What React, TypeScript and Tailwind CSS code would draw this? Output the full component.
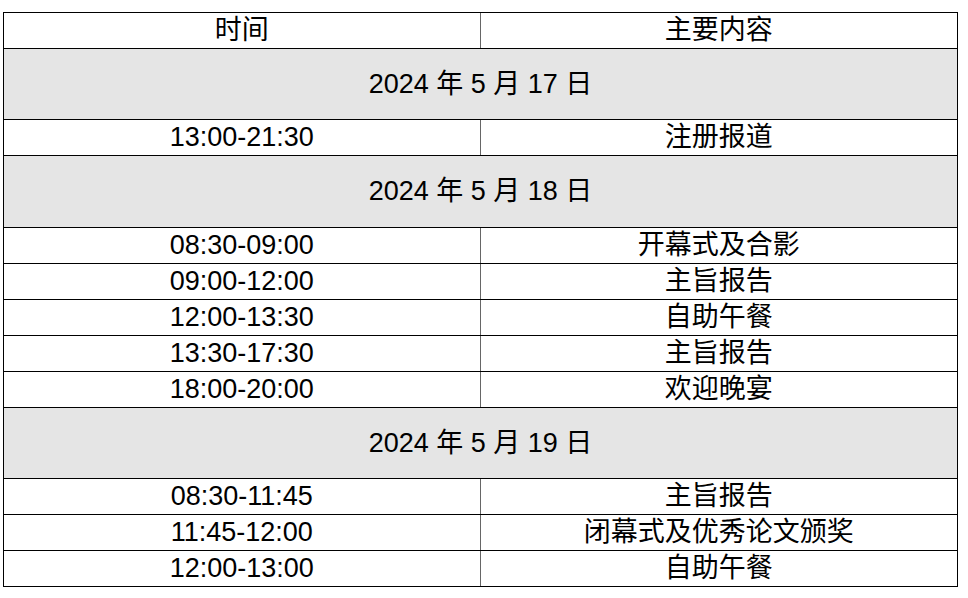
type Row =
  | { kind: 'date'; label: string; h: string }
  | { kind: 'item'; time: string; content: string }

const rows: Row[] = [
  { kind: 'date', label: '2024 年 5 月 17 日', h: 'h-[71px]' },
  { kind: 'item', time: '13:00-21:30', content: '注册报道' },
  { kind: 'date', label: '2024 年 5 月 18 日', h: 'h-[72px]' },
  { kind: 'item', time: '08:30-09:00', content: '开幕式及合影' },
  { kind: 'item', time: '09:00-12:00', content: '主旨报告' },
  { kind: 'item', time: '12:00-13:30', content: '自助午餐' },
  { kind: 'item', time: '13:30-17:30', content: '主旨报告' },
  { kind: 'item', time: '18:00-20:00', content: '欢迎晚宴' },
  { kind: 'date', label: '2024 年 5 月 19 日', h: 'h-[71px]' },
  { kind: 'item', time: '08:30-11:45', content: '主旨报告' },
  { kind: 'item', time: '11:45-12:00', content: '闭幕式及优秀论文颁奖' },
  { kind: 'item', time: '12:00-13:00', content: '自助午餐' },
]

export default function App() {
  return (
    <div
      className="min-h-[598px] w-[968px] bg-white pl-[3px] pt-[12px] text-[27px] leading-none text-black"
      style={{ fontFamily: '"Liberation Sans", "Noto Sans CJK SC", sans-serif' }}
    >
      <div className="w-[955px] border border-black">
        <div className="grid h-[36px] grid-cols-2 border-b border-black">
          <div className="flex items-center justify-center border-r border-[#666]">时间</div>
          <div className="flex items-center justify-center">主要内容</div>
        </div>
        {rows.map((row, i) => {
          const last = i === rows.length - 1
          if (row.kind === 'date') {
            return (
              <div
                key={i}
                className={`flex ${row.h} items-center justify-center bg-[#e5e5e5] ${last ? '' : 'border-b border-black'}`}
              >
                {row.label}
              </div>
            )
          }
          return (
            <div
              key={i}
              className={`grid grid-cols-2 ${last ? 'h-[35px]' : 'h-[36px] border-b border-black'}`}
            >
              <div className="flex items-center justify-center border-r border-[#666]">{row.time}</div>
              <div className="flex items-center justify-center">{row.content}</div>
            </div>
          )
        })}
      </div>
    </div>
  )
}
